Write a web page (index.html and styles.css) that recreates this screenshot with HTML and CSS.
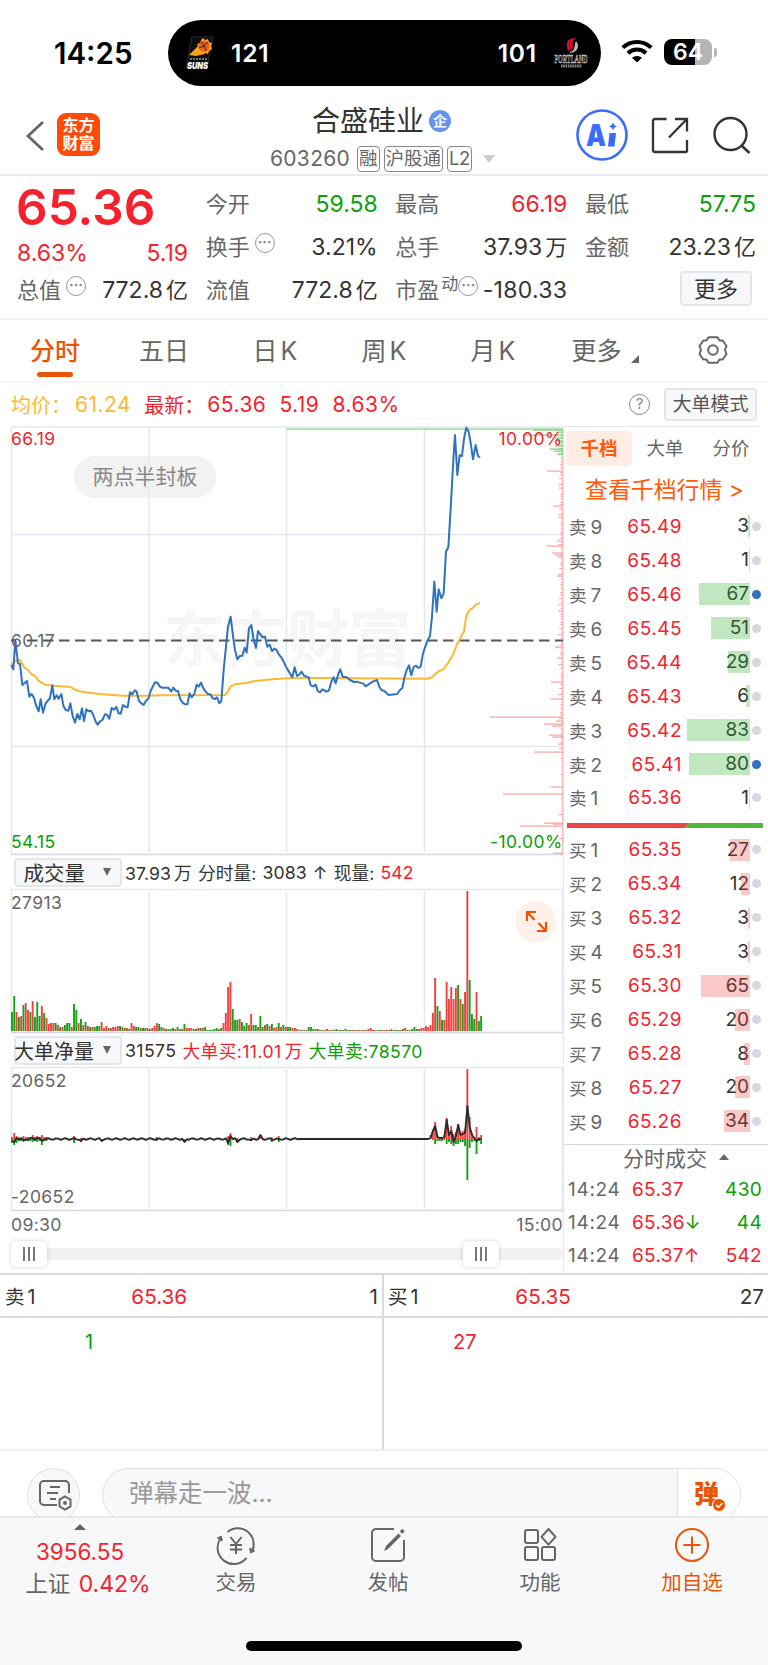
FILE: index.html
```
<!DOCTYPE html>
<html lang="zh-CN">
<head>
  <meta charset="utf-8">
  <title>合盛硅业 603260</title>
  <link rel="stylesheet" href="styles.css">
</head>
<body>
  <div class="status">
    <div class="time">14:25</div>
    <div class="island">
      <svg width="32" height="36" viewBox="0 0 32 36">
        <path d="M8 2h21l-6 31H2z" fill="#0b0b10" stroke="#2b2b33"/>
        <path d="M5 20l9-9 7 8-9 2z" fill="#f9a01b"/>
        <path d="M19 3l2 2 3-1 1 3 3 1-1 3 1 3-3 2-1 3-3-1-3 1-2-3-3-1 1-3-1-3 3-1 1-3z" fill="#f9a01b"/>
        <circle cx="20" cy="11" r="5.500" fill="#e56020"/>
        <path d="M15 13q5-1 9-6M17 7q4 3 5 9" stroke="#40200a" fill="none"/>
        <path d="M6 24h17" stroke="#999" stroke-width="1.500" stroke-dasharray="2 1"/>
        <text x="3" y="33.500" class="suns" textLength="21" lengthAdjust="spacingAndGlyphs">SUNS</text>
      </svg>
      <b class="home">121</b>
      <b class="away">101</b>
      <svg width="36" height="34" viewBox="0 0 36 34">
        <path d="M15 15c-3-8-1-13 8-13-4 3-4 7-2 10z" fill="#c8102e"/>
        <path d="M17 16c6-1 4-8 6-11 4 5 2 11-6 12z" fill="#b8bcc0"/>
        <text x="1.500" y="26.500" class="blazers" textLength="33" lengthAdjust="spacingAndGlyphs">PORTLAND</text>
        <path d="M8 30h21" stroke="#888" stroke-width="3" stroke-dasharray="1.600 .7"/>
      </svg>
    </div>
    <svg class="wifi" width="32" height="24" viewBox="0 0 32 24">
      <path d="M1.800 8.600a20.500 20.500 0 0 1 28.400 0M7 14.200a13 13 0 0 1 18 0" fill="none" stroke="#000" stroke-width="4"/>
      <path d="M11 18.800a7.500 7.500 0 0 1 10 0L16 23.600z"/>
    </svg>
    <div class="battery">64</div><i class="tip"></i>
  </div>

  <header class="topbar">
    <svg class="back" width="20" height="32" viewBox="0 0 20 32"><path d="M18 2L3 16l15 14" fill="none" stroke="#666" stroke-width="2.800"/></svg>
    <div class="logo">东方<br>财富</div>
    <div class="title">
      <h1>合盛硅业<span class="qi">企</span></h1>
      <div class="code"><span class="num">603260</span><em>融</em><em>沪股通</em><em>L2</em><i class="down"></i></div>
    </div>
    <svg class="ai" width="52" height="52" viewBox="0 0 52 52">
      <circle cx="26" cy="26" r="24.500" fill="none" stroke="#3a6bff" stroke-width="2.600"/>
      <text x="10" y="36.500" class="ai-text" textLength="20" lengthAdjust="spacingAndGlyphs">A</text>
      <path d="M33.500 24h6.500l-1.500 13.500H32z" fill="#3a6bff"/>
      <path d="M37 13.500l1.500 2.800 2.500 1.100-2.500 1.100-1.500 2.800-1.500-2.800-2.500-1.100 2.500-1.100z" fill="#3a6bff"/>
    </svg>
    <svg class="share" width="38" height="38" viewBox="0 0 38 38"><path d="M15.500 3H4a2 2 0 0 0-2 2v29a2 2 0 0 0 2 2h31a1 1 0 0 0 1-1V24M24 3h12v12.500M35.500 3.500L18 21.500" fill="none" stroke="#333" stroke-width="2.300"/></svg>
    <svg class="search" width="38" height="38" viewBox="0 0 38 38"><circle cx="17.500" cy="18" r="16" fill="none" stroke="#333" stroke-width="2.400"/><path d="M28.500 29.500L36.500 37" stroke="#333" stroke-width="2.600"/></svg>
  </header>

  <section class="quote">
    <div class="price red">
      <strong>65.36</strong>
      <div><span>8.63%</span><span>5.19</span></div>
    </div>
    <div class="cell"><label>今开</label><b class="green">59.58</b></div>
    <div class="cell"><label>最高</label><b class="red">66.19</b></div>
    <div class="cell"><label>最低</label><b class="green">57.75</b></div>
    <div class="cell"><label>换手<i class="dots">···</i></label><b>3.21%</b></div>
    <div class="cell"><label>总手</label><b>37.93<u>万</u></b></div>
    <div class="cell"><label>金额</label><b>23.23<u>亿</u></b></div>
    <div class="cell"><label>总值<i class="dots">···</i></label><b>772.8<u>亿</u></b></div>
    <div class="cell"><label>流值</label><b>772.8<u>亿</u></b></div>
    <div class="cell pe"><label>市盈<sup>动</sup><i class="dots">···</i></label><b>-180.33</b></div>
    <div class="cell last"><button class="more">更多</button></div>
  </section>

  <nav class="tabs">
    <a class="on">分时</a><a>五日</a><a>日<span>K</span></a><a>周<span>K</span></a><a>月<span>K</span></a><a>更多<i class="corner"></i></a>
    <a><svg width="30" height="30" viewBox="0 0 30 30"><path d="M10.500 2.200h9l2 3.300h3.200L28.500 11l-1.500 4 1.500 4-3.800 5.500h-3.200l-2 3.300h-9l-2-3.300H5.300L1.500 19 3 15l-1.500-4 3.800-5.500h3.200z" fill="none" stroke="#666" stroke-width="2" stroke-linejoin="round"/><circle cx="15" cy="15" r="4.800" fill="none" stroke="#666" stroke-width="2"/></svg></a>
  </nav>

  <div class="info">
    <span class="avg">均价：</span><span class="avg n1">61.24</span>
    <span class="red">最新：</span><span class="red n2">65.36</span><span class="red n3">5.19</span><span class="red n4">8.63%</span>
    <i class="help">?</i><button class="mode">大单模式</button>
  </div>

  <main>
    <div class="charts">
      <div class="minute">
        <svg id="minute" width="563" height="429" viewBox="0 426 563 429">
          <text class="mark" x="163" y="662" textLength="248">东方财富</text>
          <path class="grid" d="M11.500 427H563M11.500 534.500H563M11.500 746.500H563M11.500 427V854M149 428V852M286.500 428V852M424.500 428V852M562.500 427V854"/>
          <path class="edge" d="M11 854.500H563"/>
          <path d="M286 429H563" stroke="#b5e3b5" stroke-width="1.800"/>
          <g id="profile"></g>
          <path d="M11 640.500h5M27 640.500H563" stroke="#555" stroke-width="1.800" stroke-dasharray="10.500 5.500"/>
          <g transform="translate(0 420) scale(.33333)" fill="none" stroke-linejoin="round">
            <polyline stroke="#fdb833" stroke-width="6" points="34,735 50,720 60,720 73,743 85,750 95,763 105,768 115,782 135,794 160,797 205,800 215,803 228,811 250,816 300,822 370,827 450,827 480,826 675,825 683,816 692,799 705,793 745,788 760,784 800,779 860,775 940,774 1280,776 1296,772 1305,762 1320,752 1330,748 1345,728 1358,706 1370,675 1380,656 1392,634 1397,600 1402,580 1409,570 1420,563 1428,553 1440,549"/>
            <polyline stroke="#2f72c0" stroke-width="6" points="34,735 40,748 46,660 54,730 60,732 67,795 81,783 88,830 95,822 102,834 108,855 116,874 122,838 129,878 137,850 150,834 157,796 163,838 170,826 176,836 184,822 190,857 197,870 205,872 211,850 218,888 225,908 232,882 239,898 246,865 252,903 259,868 266,874 273,872 280,885 287,905 293,914 300,904 307,900 315,883 321,884 328,896 335,864 342,869 349,861 356,880 362,881 369,855 376,860 383,862 390,817 397,823 404,811 410,815 417,843 424,850 431,855 438,842 445,836 452,812 465,787 472,788 480,800 486,803 505,803 514,815 520,803 527,812 534,813 541,838 548,848 555,853 562,853 569,820 575,832 583,822 590,794 596,800 603,788 610,805 617,815 624,822 631,823 638,835 645,837 651,832 658,850 664,843 671,750 678,680 684,620 692,590 698,640 705,690 712,718 719,708 727,707 734,683 740,698 747,625 754,615 761,660 768,684 774,633 781,643 788,652 795,650 802,680 809,674 816,693 823,686 830,690 837,704 845,714 851,725 858,740 865,752 877,772 884,742 891,768 898,764 905,755 912,767 926,772 932,796 940,799 947,794 953,813 960,817 967,808 980,815 987,811 994,785 1001,772 1007,790 1015,762 1021,748 1028,770 1040,772 1050,780 1062,786 1070,785 1090,791 1097,799 1110,790 1120,784 1131,780 1138,800 1145,811 1152,812 1166,825 1192,822 1200,810 1207,804 1214,770 1220,750 1227,736 1234,766 1241,741 1248,737 1255,744 1262,740 1269,700 1283,660 1290,648 1296,590 1303,485 1310,575 1316,508 1324,535 1331,520 1338,395 1345,382 1353,250 1360,120 1365,45 1372,165 1379,106 1386,108 1393,50 1399,23 1406,35 1413,75 1419,118 1427,75 1434,108 1440,112"/>
          </g>
          <g class="axis">
            <text x="11" y="444.500" fill="#f5222d">66.19</text>
            <text x="562.500" y="444.500" text-anchor="end" fill="#f5222d">10.00%</text>
            <text x="11" y="646.500">60.17</text>
            <text x="11" y="847.500" fill="#0a9f0a">54.15</text>
            <text x="562.500" y="847.500" text-anchor="end" fill="#0a9f0a">-10.00%</text>
          </g>
        </svg>
        <span class="pill">两点半封板</span>
      </div>

      <div class="sub">
        <button class="pick">成交量<i></i></button>
        <span>37.93<u>万</u></span><span>分时量:</span><span>3083</span><span>↑</span><span>现量:</span><span class="red">542</span>
      </div>
      <div class="volume">
        <svg id="volume" width="563" height="145" viewBox="0 889 563 145">
          <path class="grid" d="M11 889.500H563M11.500 889V1032M149 891V1031M286.500 891V1031M424.500 891V1031M562.500 889V1032"/>
          <path class="edge" d="M11 1032.500H563"/>
          <text class="axis" x="11" y="908.500">27913</text>
        </svg>
        <svg class="expand" width="42" height="42" viewBox="0 0 42 42"><circle cx="21" cy="21" r="20.500" fill="#fef1ea"/><path d="M12 20v-9h9M12 11l7.500 8M22 30h9v-9M31 30l-7.500-8" fill="none" stroke="#ea5504" stroke-width="2.200"/></svg>
      </div>

      <div class="sub sub2">
        <button class="pick wide">大单净量<i></i></button>
        <span>31575</span><span class="red">大单买:11.01<u>万</u></span><span class="green">大单卖:78570</span>
      </div>
      <svg id="net" width="563" height="145" viewBox="0 1067 563 145">
        <path class="grid" d="M11 1067.500H563M11.500 1067V1210M149 1069V1209M286.500 1069V1209M424.500 1069V1209M562.500 1067V1212"/>
        <path class="edge" d="M11 1210.500H563"/>
        <g class="bars"></g>
        <polyline fill="none" stroke="#2b2b2b" stroke-width="1.900" stroke-linejoin="round"/>
        <text class="axis" x="11" y="1087">20652</text>
        <text class="axis" x="11" y="1203">-20652</text>
      </svg>
      <div class="times"><span>09:30</span><span>15:00</span></div>
      <div class="slider"><i class="handle"></i><i class="handle"></i></div>
    </div>

    <aside>
      <div class="modes"><a class="on">千档</a><a>大单</a><a>分价</a></div>
      <div class="depth-link">查看千档行情 &gt;</div>
      <div id="asks"></div>
      <svg class="ratio" width="196" height="5" viewBox="0 0 196 5"><path d="M0 0h122l-4 5H0z" fill="#ec4545"/><path d="M122 0h74v5h-78z" fill="#4fb83d"/></svg>
      <div id="bids"></div>
      <div class="deals-title">分时成交<i></i></div>
      <div class="deal"><span>14:24</span><b>65.37</b><b class="green">430</b></div>
      <div class="deal"><span>14:24</span><b>65.36<em class="green">↓</em></b><b class="green">44</b></div>
      <div class="deal"><span>14:24</span><b>65.37<em>↑</em></b><b>542</b></div>
    </aside>
  </main>

  <section class="queue">
    <div>
      <div class="queue-head"><span>卖<i>1</i></span><b class="red">65.36</b><span>1</span></div>
      <p class="green">1</p>
    </div>
    <div>
      <div class="queue-head"><span>买<i>1</i></span><b class="red">65.35</b><span>27</span></div>
      <p class="red">27</p>
    </div>
  </section>

  <section class="danmu">
    <div class="round"><svg width="34" height="32" viewBox="0 0 34 32"><path d="M31 14V6a4 4 0 0 0-4-4H6a4 4 0 0 0-4 4v16a4 4 0 0 0 4 4h13M12 8h10M9 14h11M12 20h6" fill="none" stroke="#666" stroke-width="2"/><path d="M27 17.500l5.500 3.200v6.600L27 30.500l-5.500-3.200v-6.600z" fill="none" stroke="#666" stroke-width="2"/><circle cx="27" cy="24" r="2" fill="#666"/></svg></div>
    <div class="field"><span>弹幕走一波...</span>
      <div class="dan">弹<svg width="14" height="14" viewBox="0 0 14 14"><circle cx="7" cy="7" r="6.500" fill="#ea5504" stroke="#fff"/><path d="M4 7l2.300 2.500L10.500 5" fill="none" stroke="#fff" stroke-width="1.500"/></svg></div>
    </div>
  </section>

  <footer>
    <div class="nav">
      <div class="index"><i></i><b>3956.55</b><span>上证 <b>0.42%</b></span></div>
      <a><svg width="40" height="36" viewBox="0 0 40 36"><path d="M11.500 5A16 16 0 0 1 36 24.500M1.500 11.500l3.500-1.500 1 4M38.500 23.500L35 25l-1-4M5 11A16 16 0 0 0 30.500 30.800" fill="none" stroke="#666" stroke-width="2"/><path d="M14.500 10l5.500 7 5.500-7M20 17v10M14 18h12M14 22.500h12" fill="none" stroke="#666" stroke-width="2"/></svg>交易</a>
      <a><svg width="36" height="36" viewBox="0 0 36 36"><path d="M24 2H6a4 4 0 0 0-4 4v24a4 4 0 0 0 4 4h24a4 4 0 0 0 4-4V13" fill="none" stroke="#666" stroke-width="2"/><path d="M14 24l2-5L28.500 6.500l2.500 2.500L18 22z" fill="#666"/><path d="M31 5.500l2.500-2.500" stroke="#666" stroke-width="3.600"/></svg>发帖</a>
      <a><svg width="34" height="36" viewBox="0 0 34 36"><g fill="none" stroke="#666" stroke-width="2"><rect x="2" y="3" width="13" height="13" rx="2"/><rect x="2" y="20" width="13" height="13" rx="2"/><rect x="19" y="20" width="13" height="13" rx="2"/><path d="M25.500 2l7 7.800-7 7.800-7-7.800z" stroke-linejoin="round"/></g></svg>功能</a>
      <a class="add"><svg width="36" height="36" viewBox="0 0 36 36"><circle cx="18" cy="18" r="16" fill="none" stroke="#ea5504" stroke-width="2"/><path d="M18 9.500v17M9.500 18h17" stroke="#ea5504" stroke-width="2"/></svg>加自选</a>
    </div>
    <div class="homebar"></div>
  </footer>
  <script src="app.js"></script>
</body>
</html>
```

FILE: styles.css
```
* {
  box-sizing: border-box;
}
body {
  margin: 0;
  width: 768px;
  background: #fff;
  color: #333;
  font-family: Inter, "Noto Sans CJK SC", sans-serif;
  white-space: nowrap;
}
i, em, u {
  font-style: normal;
  text-decoration: none;
}
b {
  font-weight: 400;
}
svg {
  display: block;
  flex: none;
  overflow: visible;
}
button {
  font-family: inherit;
  padding: 0;
  color: #333;
  background: #f7f8fa;
  border: 2px solid #e4e6ec;
  border-radius: 4px;
}
.red { color: #f5222d; }
.green { color: #0a9f0a; }

/* status bar */
.status {
  height: 86px;
  padding: 20px 0 0 54px;
  display: flex;
}
.time {
  width: 114px;
  font-size: 29.500px;
  font-weight: 600;
  line-height: 66px;
  color: #000;
}
.island {
  width: 433px;
  height: 66px;
  padding: 0 12px 0 16px;
  border-radius: 33px;
  background: #000;
  display: flex;
  align-items: center;
}
.island b {
  color: #fff;
  font-size: 24.500px;
  font-weight: 600;
  letter-spacing: .8px;
}
.island .home {
  margin-left: 15px;
}
.island .away {
  margin-left: auto;
  margin-right: 16px;
}
.suns {
  font: italic 900 9px Inter, sans-serif;
  fill: #fff;
}
.blazers {
  font: 700 12px "Liberation Serif", serif;
  fill: #222;
  stroke: #ddd;
  stroke-width: .6px;
}
.wifi {
  margin: 19px 0 0 20px;
}
.battery {
  width: 48px;
  height: 26px;
  margin: 19px 0 0 11px;
  border-radius: 8px;
  background: linear-gradient(90deg, #000 64%, #b5b5b5 64%);
  color: #fff;
  font-size: 23px;
  font-weight: 600;
  line-height: 26px;
  text-align: center;
}
.tip {
  width: 3px;
  height: 9px;
  margin: 28px 0 0 2px;
  border-radius: 0 4px 4px 0;
  background: #b5b5b5;
}

/* header */
.topbar {
  height: 90px;
  padding-left: 25px;
  border-bottom: 2px solid #ebebed;
  display: flex;
}
.back {
  margin-top: 34px;
}
.logo {
  width: 43px;
  height: 43px;
  margin: 27px 0 0 12px;
  padding-top: 4px;
  border-radius: 9px;
  background: #ff4a05;
  color: #fff;
  font-size: 16px;
  font-weight: 700;
  line-height: 17.500px;
  text-align: center;
}
.title {
  width: 407px;
  margin-left: 69px;
  padding-left: 101px;
}
h1 {
  margin: 15px 0 0 42px;
  font-size: 28px;
  font-weight: 400;
  line-height: 40px;
  display: flex;
  align-items: center;
}
.qi {
  width: 22px;
  height: 22px;
  margin-left: 5px;
  border-radius: 50%;
  background: #6495ed;
  color: #fff;
  font-size: 14px;
  font-weight: 700;
  line-height: 21px;
  text-align: center;
}
.code {
  height: 35px;
  display: flex;
  align-items: center;
  color: #666;
}
.num {
  width: 87px;
  font-size: 21px;
  letter-spacing: .3px;
}
.code em {
  height: 26px;
  margin-right: 4px;
  padding: 0 1px;
  border: 1.500px solid #888;
  border-radius: 4px;
  font-size: 18.500px;
  line-height: 23px;
}
.code em:nth-of-type(3) {
  letter-spacing: -.5px;
}
.down {
  margin-left: 7px;
  border: 6px solid transparent;
  border-top: 8px solid #ccc;
  border-bottom: 0;
}
.ai {
  margin: 23px 0 0 0;
}
.ai-text {
  font: 900 30px Inter, sans-serif;
  fill: #3a6bff;
}
.share {
  margin: 30px 0 0 23px;
}
.search {
  margin: 30px 0 0 24px;
}

/* quote */
.quote {
  height: 144px;
  padding: 7px 12px 0 17px;
  border-bottom: 2px solid #f2f2f4;
  display: grid;
  grid-template-columns: 171px 172px 172px 171px;
  grid-template-rows: 43px 43px 43px;
  justify-content: space-between;
}
.price {
  grid-row: 1 / 3;
}
.price strong {
  display: block;
  margin-left: -1px;
  font-size: 49.500px;
  font-weight: 600;
  line-height: 49px;
}
.price div {
  display: flex;
  justify-content: space-between;
  font-size: 23px;
  line-height: 43px;
}
.cell {
  display: flex;
  justify-content: space-between;
  align-items: center;
  line-height: 43px;
}
.cell label {
  display: flex;
  color: #666;
  font-size: 22px;
}
.cell b {
  font-size: 23px;
}
.cell u {
  margin-left: 3px;
  font-size: 22px;
}
.dots {
  width: 20px;
  height: 20px;
  margin: 7px 0 0 5px;
  border: 1.500px solid #999;
  border-radius: 50%;
  color: #888;
  font-size: 14px;
  font-weight: 700;
  line-height: 16px;
  text-align: center;
}
.cell sup {
  margin-left: 2px;
  font-size: 17px;
  line-height: 30px;
}
.pe .dots {
  margin-left: 0;
}
.pe b {
  letter-spacing: .3px;
}
.last {
  justify-content: flex-end;
}
.more {
  width: 72px;
  height: 35px;
  margin: -4px 4px 0 0;
  font-size: 22px;
  line-height: 30px;
}

/* tabs */
.tabs {
  height: 63px;
  border-bottom: 2px solid #f5f5f7;
  display: grid;
  grid-template-columns: 110px 108px 114px 104px 114px 110px 106px;
  justify-items: center;
  color: #666;
  font-size: 25px;
  line-height: 62px;
}
.tabs a {
  height: 61px;
  display: flex;
  position: relative;
  gap: 3px;
}
.tabs svg {
  margin-top: 15px;
}
.tabs .on {
  color: #ea5504;
  font-weight: 500;
}
.tabs .on::after {
  content: "";
  position: absolute;
  left: 7px;
  top: 52px;
  width: 36px;
  height: 5px;
  border-radius: 3px;
  background: #ea5504;
}
.corner {
  align-self: flex-end;
  margin: 0 0 18px 6px;
  border: 4px solid #666;
  border-top-color: transparent;
  border-left-color: transparent;
}

.info {
  height: 43px;
  padding: 0 11px;
  display: flex;
  align-items: center;
  font-size: 20px;
}
.avg { color: #fdb833; }
.n1, .n2, .n3, .n4 {
  font-size: 21px;
  letter-spacing: .5px;
}
.n1 { margin: 0 13px 0 4px; }
.n2 { margin: 0 13px 0 3px; }
.n3 { margin-right: 13px; }
.help {
  width: 21px;
  height: 21px;
  margin: 0 14px 0 auto;
  border: 1.500px solid #888;
  border-radius: 50%;
  color: #888;
  font-size: 15px;
  line-height: 18px;
  text-align: center;
}
.mode {
  width: 93px;
  height: 33px;
  font-size: 19px;
  line-height: 29px;
  color: #555;
}

/* charts */
main {
  height: 847px;
  display: flex;
}
.charts {
  width: 563px;
}
.minute, .volume {
  position: relative;
}
.grid {
  stroke: #e3e7ef;
  stroke-width: 1.500;
  fill: none;
}
.edge {
  stroke: #d5d8e0;
  stroke-width: 1.500;
}
.mark {
  font-size: 62px;
  font-weight: 700;
  fill: #f6f6f7;
}
.axis {
  font-size: 17.500px;
  letter-spacing: .4px;
  fill: #666;
}
.pill {
  position: absolute;
  left: 74px;
  top: 30px;
  width: 142px;
  height: 42px;
  border-radius: 21px;
  background: rgba(235, 235, 235, .65);
  color: #888;
  font-size: 21px;
  line-height: 42px;
  text-align: center;
}
.sub {
  height: 34px;
  padding-left: 14px;
  display: flex;
  align-items: center;
  font-size: 17.700px;
  letter-spacing: .1px;
  gap: 6px;
}
.sub2 {
  height: 32px;
  margin-bottom: 1px;
  letter-spacing: .4px;
}
.sub u {
  margin-left: 3px;
}
.pick {
  width: 108px;
  height: 29px;
  margin-right: -3px;
  display: flex;
  align-items: center;
  justify-content: flex-end;
  font-size: 20.500px;
}
.pick i, .deals-title i, .index i {
  margin: 0 9px 0 18px;
  border: 4.500px solid transparent;
  border-top: 8px solid #666;
  border-bottom: 0;
}
.wide {
  font-size: 20px;
  letter-spacing: 0;
}
.wide i {
  margin-left: 9px;
}
.expand {
  position: absolute;
  left: 515px;
  top: 12px;
}
.times {
  height: 28px;
  padding-left: 11px;
  display: flex;
  justify-content: space-between;
  color: #666;
  font-size: 17.700px;
  letter-spacing: .3px;
  line-height: 26px;
}
.slider {
  height: 12px;
  margin: 8px 0 0 11px;
  border-radius: 6px;
  background: #f1f1f4;
  display: flex;
  align-items: center;
  gap: 416px;
}
.handle {
  width: 36px;
  height: 26px;
  border-radius: 5px;
  background: linear-gradient(90deg, #777 2px, transparent 2px 5px, #777 5px 7px, transparent 7px 10px, #777 10px 12px) center / 12px 14px no-repeat #fff;
  box-shadow: 0 0 4px rgba(0, 0, 0, .18);
}

/* order book */
aside {
  width: 205px;
  border-left: 1px solid #e3e7ef;
}
.modes {
  width: 194px;
  height: 45px;
  padding: 4px 0 0 2px;
  border-top: 1.500px solid #e3e7ef;
  display: flex;
  color: #666;
  font-size: 18.500px;
  line-height: 34px;
  text-align: center;
}
.modes a {
  width: 66px;
  height: 35px;
  flex: none;
}
.modes .on {
  border-radius: 5px;
  background: #ffece3;
  color: #ff5a0a;
  font-weight: 700;
}
.depth-link {
  height: 38px;
  padding-left: 21px;
  color: #ff5a0a;
  font-size: 22.900px;
  line-height: 38px;
}
.level {
  height: 33.950px;
  padding: 1px 7px 0 5px;
  display: flex;
  align-items: center;
  font-size: 19px;
}
.level label {
  width: 46px;
  color: #666;
  display: flex;
  align-items: baseline;
  font-size: 17.500px;
  gap: 4px;
}
.level label span {
  font-size: 19px;
}
.level b {
  width: 67px;
  text-align: right;
  color: #f5222d;
  letter-spacing: .5px;
}
.qty {
  flex: 1;
  height: 22px;
  padding-right: 1px;
  line-height: 22px;
  text-align: right;
  position: relative;
}
.qty i {
  position: absolute;
  right: 0;
  top: 0;
  height: 22px;
  background: rgba(50, 175, 50, .3);
}
#bids .qty i {
  background: rgba(245, 60, 60, .28);
}
.dot {
  width: 9px;
  height: 9px;
  margin-left: 2px;
  border-radius: 50%;
  background: #d5d8e0;
}
.hot {
  background: #2f72c0;
}
.ratio {
  margin: 9px 0 4px 3px;
}
.deals-title {
  height: 29px;
  margin-top: 6px;
  border-top: 1.500px solid #d5d8e0;
  display: flex;
  align-items: center;
  padding: 0 0 3px 59px;
  color: #666;
  font-size: 21px;
}
.deals-title i, .index i {
  margin: 0 0 0 12px;
  border: 5px solid transparent;
  border-bottom: 6px solid #666;
  border-top: 0;
}
.deal {
  height: 33.200px;
  padding: 0 6px 0 4px;
  display: flex;
  align-items: center;
  font-size: 19px;
}
.deal span {
  width: 64px;
  color: #666;
  letter-spacing: .7px;
}
.deal b {
  color: #f5222d;
  letter-spacing: .3px;
}
.deal b:last-child {
  margin-left: auto;
}
.deal em {
  display: inline-block;
  width: 12px;
  text-align: center;
}
.deal .green {
  color: #0a9f0a;
}

/* best bid / ask queue */
.queue {
  height: 178px;
  border-top: 2px solid #d8dae1;
  border-bottom: 2px solid #f0f1f3;
  display: grid;
  grid-template-columns: 384px 384px;
}
.queue > div {
  height: 174px;
}
.queue > div:first-child {
  border-right: 2px solid #d8dae1;
}
.queue-head {
  height: 43px;
  padding: 0 4px 0 5px;
  border-bottom: 2px solid #d8dae1;
  display: grid;
  grid-template-columns: 1fr 1fr 1fr;
  font-size: 20.700px;
  line-height: 44px;
}
.queue > div:last-child .queue-head {
  padding-left: 4px;
}
.queue-head i {
  margin-left: 3px;
}
.queue-head span:first-child {
  font-size: 19.500px;
}
.queue-head span:last-child {
  text-align: right;
}
.queue-head b {
  padding-left: 2px;
}
.queue p {
  margin: 0;
  padding-left: 85px;
  font-size: 20px;
  line-height: 48px;
}
.queue p.red {
  padding-left: 69px;
}

/* comment bar */
.danmu {
  height: 65px;
  padding: 17px 27px 0;
  display: flex;
  justify-content: space-between;
  overflow: hidden;
}
.round {
  width: 53px;
  height: 54px;
  border: 1.500px solid #e0e2e8;
  border-radius: 50%;
  background: #f7f8fa;
  padding: 10px 0 0 10px;
}
.field {
  width: 639px;
  height: 54px;
  border: 1.500px solid #e0e2e8;
  border-radius: 27px;
  background: #f7f8fa;
  display: flex;
  overflow: hidden;
  color: #999;
  font-size: 24.500px;
  line-height: 48px;
}
.field span {
  width: 574px;
  padding-left: 26px;
}
.dan {
  flex: 1;
  position: relative;
  padding-left: 16px;
  border-left: 1.500px solid #e0e2e8;
  background: #fff;
  color: #ea5504;
  font-size: 25px;
  font-weight: 900;
  line-height: 51px;
}
.dan svg {
  position: absolute;
  left: 34px;
  top: 29px;
}

/* bottom nav */
footer {
  height: 149px;
  border-top: 2px solid #e6e8ec;
  background: #f7f8fa;
}
.nav {
  height: 123px;
  display: grid;
  grid-template-columns: 160px 152px 152px 152px 152px;
  color: #666;
  font-size: 20.500px;
}
.nav a {
  padding-top: 9px;
  display: flex;
  flex-direction: column;
  align-items: center;
  line-height: 40px;
}
.nav .add {
  color: #ea5504;
}
.index {
  display: flex;
  flex-direction: column;
  align-items: center;
  font-size: 22.500px;
  line-height: 32px;
}
.index i {
  margin: 6px 0 7px;
  border-width: 0 6.500px 6px;
}
.index b {
  color: #f5222d;
}
.index > b {
  line-height: 30px;
}
.index span {
  margin-left: 16px;
  line-height: 33px;
}
.index span b {
  margin-left: 2px;
  font-size: 23px;
}
.homebar {
  width: 276px;
  height: 10px;
  margin: 0 auto;
  border-radius: 5px;
  background: #000;
}
```

FILE: app.js
```
var NS = "http://www.w3.org/2000/svg";
var RED = "#f04040";
var GREEN = "#16a016";

function rect(parent, x, y, w, h, fill) {
  var r = document.createElementNS(NS, "rect");
  r.setAttribute("x", x);
  r.setAttribute("y", y);
  r.setAttribute("width", w);
  r.setAttribute("height", h);
  r.setAttribute("fill", fill);
  parent.appendChild(r);
}

// order book: level, price, lots, marked
var asks = [[9, "65.49", 3], [8, "65.48", 1], [7, "65.46", 67, 1], [6, "65.45", 51], [5, "65.44", 29], [4, "65.43", 6], [3, "65.42", 83], [2, "65.41", 80, 1], [1, "65.36", 1]];
var bids = [[1, "65.35", 27], [2, "65.34", 12], [3, "65.32", 3], [4, "65.31", 3], [5, "65.30", 65], [6, "65.29", 20], [7, "65.28", 8], [8, "65.27", 20], [9, "65.26", 34]];

function levels(id, side, rows) {
  var html = "";
  for (var i = 0; i < rows.length; i++) {
    var r = rows[i];
    html += '<div class="level"><label>' + side + '<span>' + r[0] + '</span></label><b>' + r[1] + '</b>' +
      '<div class="qty">' + r[2] + '<i style="width:' + (r[2] * 0.757).toFixed(1) + 'px"></i></div>' +
      '<span class="dot' + (r[3] ? ' hot' : '') + '"></span></div>';
  }
  document.getElementById(id).innerHTML = html;
}
levels("asks", "卖", asks);
levels("bids", "买", bids);

// one bar a minute, g/r + height
var vol = ("g19 g35 r19 g14 r15 g26 r28 r21 g19 r30 g14 g29 g15 r25 g18 r13 r7 r8 r8 g8 r6 g4 r4 g6 g8 g8 r4 g27 g21 r8 g12 r6 g9 r5 g4 r4 g4 g5 g5 r9 " +
  "r3 r5 g3 r3 r4 r4 r5 g5 r4 g3 r3 g2 r8 r5 g4 g4 r3 g3 g3 r3 g2 r3 r5 r8 g7 g4 r3 g2 r2 g2 g3 r2 g4 r2 g2 g7 r3 r3 r3 g2 " +
  "g2 r3 g3 r3 g4 g1 g1 g1 g2 g3 r2 g3 r8 r18 r44 r49 g22 g11 g11 r12 g9 g5 g8 r6 r17 g6 g6 r4 g15 g4 r6 g7 r5 g7 r3 r4 g8 r4 g6 " +
  "r4 g4 g4 r3 r3 r2 g1 r1 g1 r1 g4 g4 g2 r2 g2 g1 r1 g1 r2 r1 g1 r1 g2 r1 g1 g1 g2 r1 g1 r1 g1 r1 g1 r1 r2 r3 r1 r1 g1 g1 " +
  "r1 r1 g1 r1 r2 g1 g1 r1 r1 g2 r3 g1 r1 g2 g4 g2 r2 r3 r3 r5 r4 r6 r18 r53 g25 r20 g11 r11 r49 r32 r44 r32 r43 g46 r32 g27 r39 r140 g51 g17 g12 r39 g10 g15").split(" ");
var PEAK = 198;
var volume = document.getElementById("volume");
// quiet minutes before the rally keep the peak on its minute
while (vol.indexOf("r140") < PEAK) vol.splice(150, 0, "r1");
for (var i = 0; i < vol.length; i++) {
  var h = +vol[i].slice(1);
  rect(volume, (11 + i * 2.3).toFixed(1), 1031 - h, 1.9, h, vol[i][0] == "r" ? RED : GREEN);
}

// large orders: minute -> bought, sold, net
var big = {0: [2, 4, -2], 1: [6, 6, -3], 2: [3, 4, 1], 5: [3, 3, -1], 9: [4, 3, 1], 11: [3, 3, 1], 13: [4, 6, -2], 27: [3, 4, 1], 30: [1, 3, -2], 39: [0, 2, -2], 63: [2, 2, 0], 75: [0, 3, -3],
  94: [3, 6, -4], 95: [6, 7, 3], 98: [1, 3, -3], 104: [2, 2, -1], 108: [3, 0, 4], 113: [2, 3, -1], 116: [3, 3, 0],
  182: [4, 0, 1], 183: [9, 1, 8], 184: [17, 5, 13], 185: [3, 2, 2], 186: [2, 2, 1], 187: [2, 2, 1], 188: [4, 1, 2], 189: [21, 5, 19], 190: [6, 3, 4], 191: [13, 5, 8], 192: [5, 7, -3], 193: [7, 5, 3],
  194: [15, 5, 14], 195: [7, 3, 4], 196: [8, 3, 5], 197: [10, 7, 6], 198: [70, 41, 33], 199: [22, 9, 12], 200: [6, 3, 4], 201: [2, 2, 1], 202: [12, 15, -2], 203: [2, 2, 0], 204: [4, 5, 0]};
var bars = document.querySelector("#net .bars");
var line = [];
for (i = 0; i < 205; i++) {
  var x = 11 + i * 2.3;
  var wave = i < 125 ? Math.sin(i * 1.7) * 0.8 : 0;
  var b = big[i] || [i < 16 ? 2 : 0, i < 16 ? 2 : 0, wave];
  if (b[0]) rect(bars, x.toFixed(1), 1139 - b[0], 1.9, b[0], RED);
  if (b[1]) rect(bars, x.toFixed(1), 1139, 1.9, b[1], GREEN);
  line.push((x + 1).toFixed(1) + "," + (1139 - b[2]).toFixed(1));
}
document.querySelector("#net polyline").setAttribute("points", line.join(" "));

// volume by price along the right edge
var profile = document.getElementById("profile");
for (i = 0; i < 213; i++) {
  var y = 430 + i * 2;
  var w = 1 + (i * 7 % 5) * (i % 3 ? 0.4 : 0.9);
  if (y > 750 && i % 4) w = 1;
  rect(profile, 563 - w, y, w, 1.2, y < 457 ? "#8fd08f" : "#f7a8a8");
}
var peaks = [[430, 30, 1], [432, 6, 1], [435, 40, 1], [438, 8, 1], [441, 6, 1], [446, 8, 1], [449, 13, 1], [451, 9, 1], [454, 6, 1], [471, 16], [488, 4], [506, 10], [517, 4], [541, 6], [546, 16], [553, 11], [555, 8], [557, 6], [576, 6], [611, 5], [647, 8], [658, 6], [682, 12], [699, 12], [717, 73], [721, 7], [724, 19], [726, 11], [735, 14], [737, 11], [744, 5], [752, 29], [787, 12], [794, 60], [823, 19], [824, 10], [826, 43], [853, 10]];
peaks.forEach(function (p) {
  rect(profile, 563 - p[1], p[0] - 0.6, p[1], 1.4, p[2] ? "#8fd08f" : "#f7b0b0");
});
```
